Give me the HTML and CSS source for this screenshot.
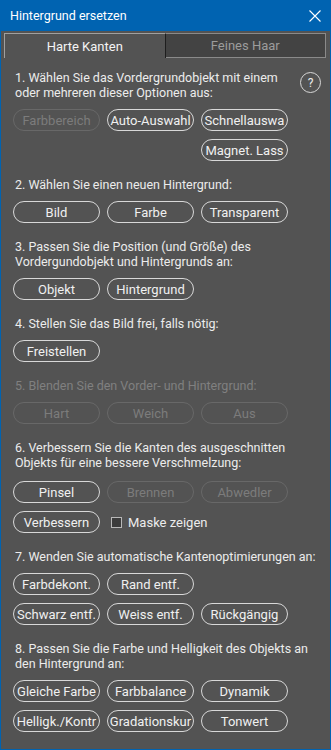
FILE: index.html
```html
<!DOCTYPE html>
<html lang="de">
<head>
    <meta charset="UTF-8">
    <meta name="viewport" content="width=device-width, initial-scale=1.0">
    <title>Hintergrund ersetzen</title>
    <link rel="stylesheet" href="styles.css">
</head>
<body>
<div class="window">
    <div class="titlebar">
        <span class="title">Hintergrund ersetzen</span>
        <svg class="close" width="12" height="12" viewBox="0 0 12 12">
            <path d="M0.5 0.5 L11.5 11.5 M11.5 0.5 L0.5 11.5" stroke="#fff" stroke-width="1.1" fill="none"/>
        </svg>
    </div>

    <div class="tabs">
        <div class="tab active">Harte Kanten</div>
        <div class="tab">Feines Haar</div>
    </div>

    <div class="content">
        <div class="section">
            <div class="head">
                <p class="label">1. Wählen Sie das Vordergrundobjekt mit einem oder mehreren dieser Optionen aus:</p>
                <button class="help">?</button>
            </div>
            <div class="buttons">
                <button class="pill" disabled>Farbbereich</button>
                <button class="pill">Auto-Auswahl</button>
                <button class="pill">Schnellauswa</button>
                <span></span>
                <span></span>
                <button class="pill">Magnet. Lass</button>
            </div>
        </div>

        <div class="section">
            <p class="label">2. Wählen Sie einen neuen Hintergrund:</p>
            <div class="buttons">
                <button class="pill">Bild</button>
                <button class="pill">Farbe</button>
                <button class="pill">Transparent</button>
            </div>
        </div>

        <div class="section">
            <p class="label">3. Passen Sie die Position (und Größe) des Vordergundobjekt und Hintergrunds an:</p>
            <div class="buttons">
                <button class="pill">Objekt</button>
                <button class="pill">Hintergrund</button>
            </div>
        </div>

        <div class="section">
            <p class="label">4. Stellen Sie das Bild frei, falls nötig:</p>
            <div class="buttons">
                <button class="pill">Freistellen</button>
            </div>
        </div>

        <div class="section">
            <p class="label disabled">5. Blenden Sie den Vorder- und Hintergrund:</p>
            <div class="buttons">
                <button class="pill" disabled>Hart</button>
                <button class="pill" disabled>Weich</button>
                <button class="pill" disabled>Aus</button>
            </div>
        </div>

        <div class="section">
            <p class="label wide">6. Verbessern Sie die Kanten des ausgeschnitten Objekts für eine bessere Verschmelzung:</p>
            <div class="buttons">
                <button class="pill">Pinsel</button>
                <button class="pill" disabled>Brennen</button>
                <button class="pill" disabled>Abwedler</button>
                <button class="pill">Verbessern</button>
                <label class="check"><span class="box"></span>Maske zeigen</label>
            </div>
        </div>

        <div class="section">
            <p class="label">7. Wenden Sie automatische Kantenoptimierungen an:</p>
            <div class="buttons">
                <button class="pill">Farbdekont.</button>
                <button class="pill">Rand entf.</button>
                <span></span>
                <button class="pill">Schwarz entf.</button>
                <button class="pill">Weiss entf.</button>
                <button class="pill">Rückgängig</button>
            </div>
        </div>

        <div class="section">
            <p class="label">8. Passen Sie die Farbe und Helligkeit des Objekts an den Hintergrund an:</p>
            <div class="buttons">
                <button class="pill">Gleiche Farbe</button>
                <button class="pill">Farbbalance</button>
                <button class="pill">Dynamik</button>
                <button class="pill">Helligk./Kontr</button>
                <button class="pill">Gradationskur</button>
                <button class="pill">Tonwert</button>
            </div>
        </div>
    </div>
</div>
</body>
</html>
```

FILE: styles.css
```css
body {
    margin: 0;
    padding: 0;
    background-color: #535353;
    font-family: Roboto, "Liberation Sans", sans-serif;
    font-size: 12.5px;
    color: #ececec;
}
.window {
    width: 331px;
    height: 750px;
    box-sizing: border-box;
    border: 1px solid #0063b1;
    border-top: none;
    background-color: #535353;
    overflow: hidden;
}
.titlebar {
    height: 31px;
    margin: 0 -1px;
    padding: 0 10px 0 10px;
    background-color: #0063b1;
    display: flex;
    align-items: center;
    justify-content: space-between;
    color: #fff;
}
.title {
    font-size: 12.5px;
}
.tabs {
    display: flex;
    margin: 2px 4px 0 3px;
    height: 25px;
}
.tab {
    flex: 1;
    display: flex;
    align-items: center;
    justify-content: center;
    box-sizing: border-box;
    font-size: 13px;
}
.tab.active {
    background-color: #535353;
    border-left: 1px solid #a0a0a0;
    border-top: 1px solid #a0a0a0;
    border-right: 1px solid #1e1e1e;
    color: #f4f4f4;
}
.tab:not(.active) {
    background-color: #434343;
    border-top: 1px solid #8a8a8a;
    border-right: 1px solid #8a8a8a;
    border-bottom: 1px solid #8a8a8a;
    color: #9c9c9c;
}
.content {
    padding: 12px 12px 0 12px;
}
.section {
    margin-bottom: 16px;
}
.head {
    display: flex;
    justify-content: space-between;
    align-items: flex-start;
}
.label {
    margin: 0 0 9px 2px;
    line-height: 15px;
}
.label.wide {
    margin-bottom: 11px;
}
.label.disabled {
    color: #808080;
}
.help {
    flex: none;
    width: 21px;
    height: 21px;
    margin: 2px -3px 0 8px;
    border: 1px solid #d8d8d8;
    border-radius: 50%;
    background: transparent;
    color: #ececec;
    font-family: inherit;
    font-size: 12px;
    padding: 0;
}
.buttons {
    display: grid;
    grid-template-columns: 87px 87px 87px;
    column-gap: 7px;
    row-gap: 8px;
}
.pill {
    height: 22px;
    padding: 0;
    border: 1px solid #d8d8d8;
    border-radius: 11px;
    background: transparent;
    color: #f0f0f0;
    font-family: inherit;
    font-size: 13px;
    white-space: nowrap;
    overflow: hidden;
}
.pill:disabled {
    border-color: #686868;
    color: #7c7c7c;
}
.check {
    grid-column: span 2;
    display: flex;
    align-items: center;
    gap: 6px;
    padding-left: 4px;
    font-size: 13px;
    white-space: nowrap;
}
.box {
    width: 9px;
    height: 9px;
    border: 1px solid #b8b8b8;
    background-color: #3c3c3c;
}
```
